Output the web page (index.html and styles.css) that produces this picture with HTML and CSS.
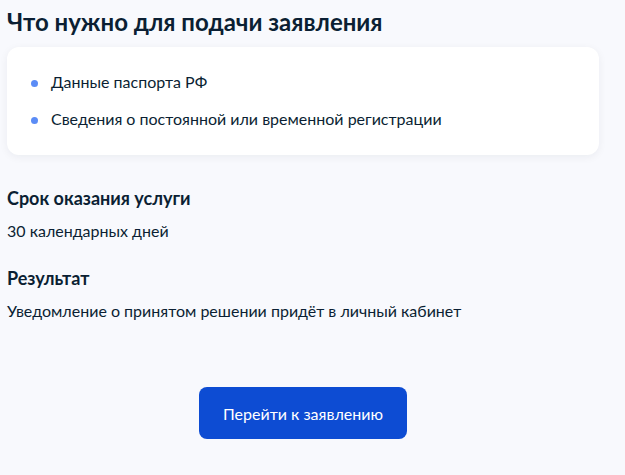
FILE: index.html
```html
<!DOCTYPE html>
<html lang="ru">
<head>
    <meta charset="UTF-8">
    <meta name="viewport" content="width=device-width, initial-scale=1.0">
    <title>Что нужно для подачи заявления</title>
    <link rel="stylesheet" href="styles.css">
</head>
<body>
    <div class="container">
        <h1>Что нужно для подачи заявления</h1>

        <!-- Documents card -->
        <div class="card">
            <ul class="docs">
                <li>Данные паспорта РФ</li>
                <li>Сведения о постоянной или временной регистрации</li>
            </ul>
        </div>

        <div class="info">
            <h3>Срок оказания услуги</h3>
            <p>30 календарных дней</p>
        </div>

        <div class="info">
            <h3>Результат</h3>
            <p>Уведомление о принятом решении придёт в личный кабинет</p>
        </div>

        <div class="actions">
            <button class="btn">Перейти к заявлению</button>
        </div>
    </div>
</body>
</html>
```

FILE: styles.css
```css
body {
    background-color: #f8f9fd;
    font-family: Lato, "Noto Sans", sans-serif;
    color: #0b1f33;
    margin: 0;
    padding: 0;
}
.container {
    width: 592px;
    padding: 0 7px;
}
h1 {
    font-size: 24px;
    line-height: 30px;
    font-weight: 700;
    margin: 7px 0 10px;
}
.card {
    background-color: #fff;
    border-radius: 12px;
    box-shadow: 0 2px 8px rgba(11, 31, 51, 0.06);
    padding: 23px 24px 24px;
}
.docs {
    list-style: none;
    margin: 0;
    padding: 0;
}
.docs li {
    position: relative;
    padding-left: 20px;
    font-size: 16px;
    line-height: 24px;
}
.docs li + li {
    margin-top: 13px;
}
.docs li::before {
    content: "";
    position: absolute;
    left: 0;
    top: 10px;
    width: 7px;
    height: 7px;
    border-radius: 50%;
    background-color: #5b8cf6;
}
.info {
    margin-top: 31px;
}
.info h3 {
    font-size: 18px;
    line-height: 24px;
    font-weight: 700;
    margin: 0 0 9px;
}
.info p {
    font-size: 16px;
    line-height: 24px;
    margin: 0;
}
.info + .info {
    margin-top: 23px;
}
.actions {
    display: flex;
    justify-content: center;
    margin-top: 64px;
}
.btn {
    background-color: #0d4cd3;
    color: #fff;
    font-family: inherit;
    font-size: 16px;
    border: none;
    border-radius: 8px;
    width: 208px;
    height: 52px;
    cursor: pointer;
}
```
